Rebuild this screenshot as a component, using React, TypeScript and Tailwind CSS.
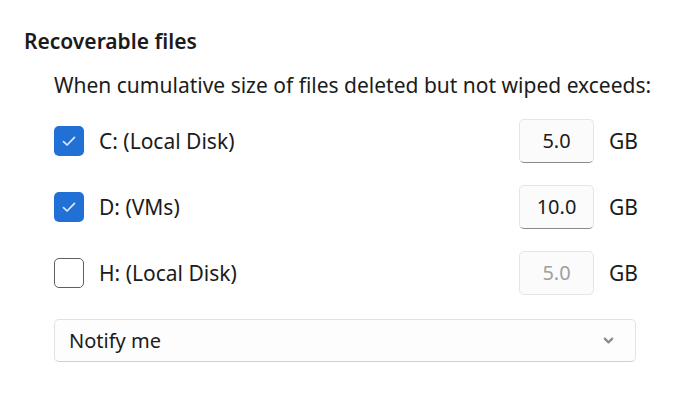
import { ChevronDown } from 'lucide-react';

type Drive = { id: string; label: string; value: string; checked: boolean };

const drives: Drive[] = [
  { id: 'c', label: 'C: (Local Disk)', value: '5.0', checked: true },
  { id: 'd', label: 'D: (VMs)', value: '10.0', checked: true },
  { id: 'h', label: 'H: (Local Disk)', value: '5.0', checked: false },
];

function Checkbox({ checked }: { checked: boolean }) {
  if (checked) {
    return (
      <div className="w-[30px] h-[30px] rounded-[5px] bg-[#2170d6] flex items-center justify-center shrink-0">
        <svg width="18" height="18" viewBox="0 0 18 18" fill="none">
          <path d="M3.5 9.6l3.6 3.4L14.5 5.4" stroke="#dde9fb" strokeWidth="1.7" strokeLinecap="round" strokeLinejoin="round" />
        </svg>
      </div>
    );
  }
  return <div className="w-[30px] h-[30px] rounded-[5px] border-[1.5px] border-[#5f5f5f] bg-white shrink-0" />;
}

export default function App() {
  return (
    <div
      className="w-[693px] h-[401px] bg-white text-[#1b1b1b] overflow-hidden"
      style={{ fontFamily: '"Noto Sans", "Open Sans", sans-serif' }}
    >
      <div className="pt-[27px] pl-[24px]">
        <h2 className="text-[21px] leading-[28px] font-semibold">Recoverable files</h2>
      </div>

      <div className="ml-[54px] w-[582px]">
        <p className="mt-[16px] text-[21px] leading-[28px] whitespace-nowrap">
          When cumulative size of files deleted but not wiped exceeds:
        </p>

        <div className="mt-[20px] flex flex-col gap-[22px]">
          {drives.map((drive) => (
            <div key={drive.id} className="flex items-center h-[44px]">
              <Checkbox checked={drive.checked} />
              <span className="ml-[15px] flex-1 text-[21px] leading-[28px]">{drive.label}</span>
              <div
                className={
                  drive.checked
                    ? 'w-[75px] h-[44px] rounded-[5px] bg-[#fbfbfb] border border-[#e5e5e5] border-b-[#8a8a8a] flex items-center justify-center text-[20px]'
                    : 'w-[75px] h-[44px] rounded-[5px] bg-[#fbfbfb] border border-[#e5e5e5] flex items-center justify-center text-[20px] text-[#a0a0a0]'
                }
              >
                {drive.value}
              </div>
              <span className="ml-[15px] w-[27px] text-[21px] leading-[28px]">GB</span>
            </div>
          ))}
        </div>

        <div className="mt-[24px] h-[43px] rounded-[5px] bg-[#fdfdfd] border border-[#e2e2e2] border-b-[#d0d0d0] flex items-center justify-between pl-[14px] pr-[19px]">
          <span className="text-[20px] leading-[28px]">Notify me</span>
          <ChevronDown size={15} strokeWidth={3.4} className="text-[#8a8a8a]" />
        </div>
      </div>
    </div>
  );
}
